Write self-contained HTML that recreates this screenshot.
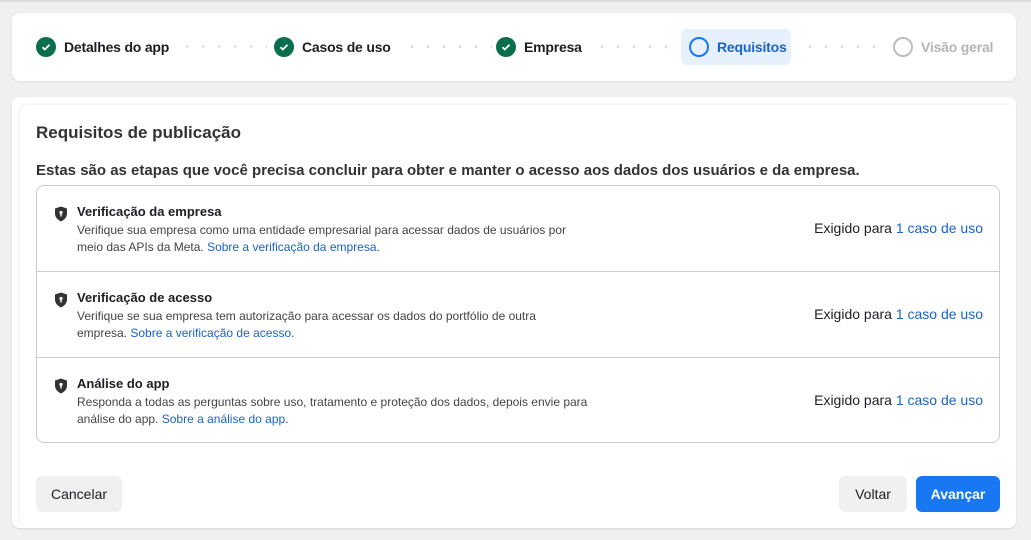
<!DOCTYPE html>
<html><head><meta charset="utf-8"><style>
*{box-sizing:border-box;margin:0;padding:0}
body{width:1031px;height:540px;background:#f0f0f0;font-family:"Liberation Sans",Arial,sans-serif;position:relative;overflow:hidden}
.tl{position:absolute;left:0;top:0;width:1031px;height:2px;background:#dcdcdc}
.top{position:absolute;left:12px;top:13px;width:1004px;height:68px;background:#fff;border-radius:8px;box-shadow:0 1px 2px rgba(0,0,0,.08)}
.step{position:absolute;top:0;height:68px;display:flex;align-items:center;font-weight:bold;font-size:14px;color:#1c1e21;letter-spacing:-0.2px}
.chk{width:20px;height:20px;border-radius:50%;background:#0a6e4c;margin-right:8px;display:flex;align-items:center;justify-content:center}
.ring{width:20px;height:20px;border-radius:50%;border:2px solid #1877f2;margin-right:8px}
.dots{position:absolute;top:32px;height:3px;background-image:radial-gradient(circle,#e0e0e0 1.4px,transparent 1.6px);background-size:16px 3px}
.outer{position:absolute;left:12px;top:97px;width:1004px;height:431px;background:#fff;border-radius:8px;box-shadow:0 1px 2px rgba(0,0,0,.1)}
.inner{position:absolute;left:20px;top:105px;width:996px;height:423px;background:#fff;border-radius:8px;box-shadow:-1px -1px 2px rgba(0,0,0,.06)}
h1{position:absolute;left:36px;top:123px;font-size:17px;font-weight:bold;color:#333}
.sub{position:absolute;left:36px;top:162px;font-size:15px;font-weight:bold;color:#333}
.box{position:absolute;left:36px;top:185px;width:964px;height:258px;border:1px solid #ccc;border-radius:8px}
.row{position:absolute;left:0;width:962px;height:86px;border-bottom:1px solid #ccc}
.row:last-child{border-bottom:none}
.sh{position:absolute;left:17px;top:20px}
.t{position:absolute;left:40px;top:18px;font-size:13px;font-weight:bold;color:#1c1e21}
.d{position:absolute;left:40px;top:36px;width:510px;font-size:12px;line-height:17px;color:#444}
a{color:#1a64c9;text-decoration:none}
.r{position:absolute;right:16px;top:34px;font-size:14px;color:#1c1e21}
.btn{position:absolute;top:476px;height:36px;border-radius:6px;font-size:14px;display:flex;align-items:center;justify-content:center}
</style></head><body>
<div class="tl"></div>
<div class="top">
<div class="step" style="left:24px"><div class="chk"><svg width="12" height="12" viewBox="0 0 12 12"><path d="M2.5 6.2l2.3 2.3 4.7-4.8" stroke="#fff" stroke-width="1.8" fill="none"/></svg></div>Detalhes do app</div>
<div class="dots" style="left:167px;width:88px"></div>
<div class="step" style="left:262px"><div class="chk"><svg width="12" height="12" viewBox="0 0 12 12"><path d="M2.5 6.2l2.3 2.3 4.7-4.8" stroke="#fff" stroke-width="1.8" fill="none"/></svg></div>Casos de uso</div>
<div class="dots" style="left:392px;width:88px"></div>
<div class="step" style="left:484px"><div class="chk"><svg width="12" height="12" viewBox="0 0 12 12"><path d="M2.5 6.2l2.3 2.3 4.7-4.8" stroke="#fff" stroke-width="1.8" fill="none"/></svg></div>Empresa</div>
<div class="dots" style="left:582px;width:82px"></div>
<div style="position:absolute;left:669px;top:16px;width:110px;height:36px;background:#e7f0fd;border-radius:6px"></div>
<div class="step" style="left:677px;color:#1a64c9"><div class="ring"></div>Requisitos</div>
<div class="dots" style="left:790px;width:82px"></div>
<div class="step" style="left:881px;color:#b5b5b5"><div class="ring" style="border-color:#bdbdbd"></div>Visão geral</div>
</div>
<div class="outer"></div><div class="inner"></div>
<h1>Requisitos de publicação</h1>
<div class="sub">Estas são as etapas que você precisa concluir para obter e manter o acesso aos dados dos usuários e da empresa.</div>
<div class="box">
<div class="row" style="top:0"><svg class="sh" width="14" height="16" viewBox="0 0 14 16"><path d="M7 0.5L13 2.5v5c0 4-3 6.5-6 8-3-1.5-6-4-6-8v-5z" fill="#333"/><circle cx="7" cy="6.5" r="1.6" fill="#fff"/><rect x="6.3" y="7" width="1.4" height="3.5" fill="#fff"/></svg><div class="t">Verificação da empresa</div><div class="d">Verifique sua empresa como uma entidade empresarial para acessar dados de usuários por meio das APIs da Meta. <a>Sobre a verificação da empresa</a>.</div><div class="r">Exigido para <a>1 caso de uso</a></div></div>
<div class="row" style="top:86px"><svg class="sh" width="14" height="16" viewBox="0 0 14 16"><path d="M7 0.5L13 2.5v5c0 4-3 6.5-6 8-3-1.5-6-4-6-8v-5z" fill="#333"/><circle cx="7" cy="6.5" r="1.6" fill="#fff"/><rect x="6.3" y="7" width="1.4" height="3.5" fill="#fff"/></svg><div class="t">Verificação de acesso</div><div class="d">Verifique se sua empresa tem autorização para acessar os dados do portfólio de outra empresa. <a>Sobre a verificação de acesso</a>.</div><div class="r">Exigido para <a>1 caso de uso</a></div></div>
<div class="row" style="top:172px"><svg class="sh" width="14" height="16" viewBox="0 0 14 16"><path d="M7 0.5L13 2.5v5c0 4-3 6.5-6 8-3-1.5-6-4-6-8v-5z" fill="#333"/><circle cx="7" cy="6.5" r="1.6" fill="#fff"/><rect x="6.3" y="7" width="1.4" height="3.5" fill="#fff"/></svg><div class="t">Análise do app</div><div class="d" style="width:522px">Responda a todas as perguntas sobre uso, tratamento e proteção dos dados, depois envie para análise do app. <a>Sobre a análise do app</a>.</div><div class="r">Exigido para <a>1 caso de uso</a></div></div>
</div>
<div class="btn" style="left:36px;width:86px;background:#f0f0f0;color:#1c1e21">Cancelar</div>
<div class="btn" style="left:839px;width:68px;background:#f0f0f0;color:#1c1e21">Voltar</div>
<div class="btn" style="left:916px;width:84px;background:#1877f2;color:#fff;font-weight:bold">Avançar</div>
</body></html>
